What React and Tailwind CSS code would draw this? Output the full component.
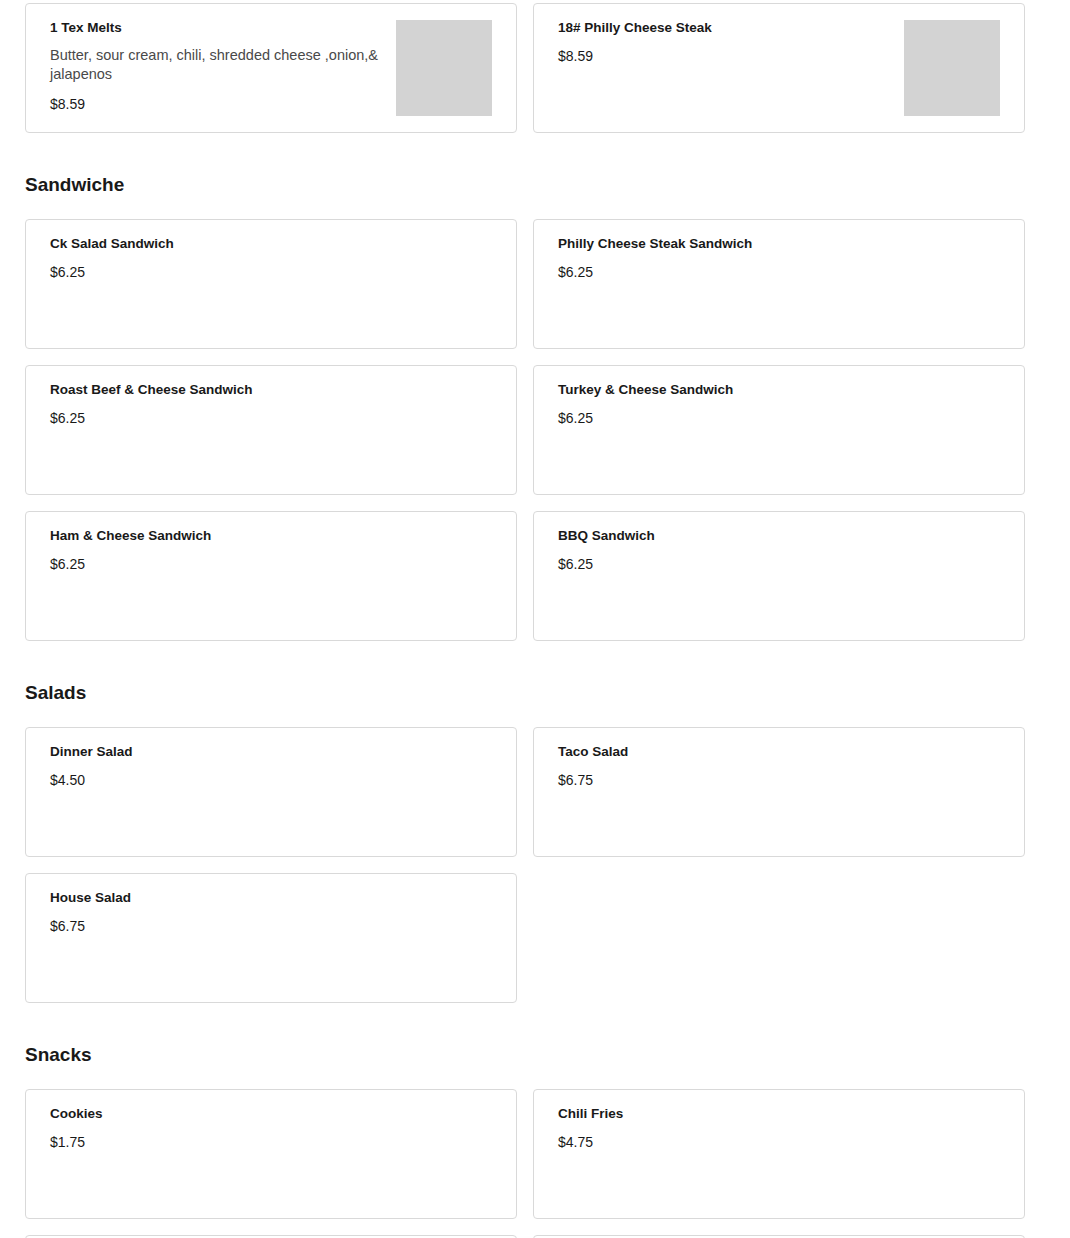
const sections = [
  {
    title: null,
    items: [
      {
        name: "1 Tex Melts",
        desc: "Butter, sour cream, chili, shredded cheese ,onion,& jalapenos",
        price: "$8.59",
        image: true,
      },
      { name: "18# Philly Cheese Steak", price: "$8.59", image: true },
    ],
  },
  {
    title: "Sandwiche",
    items: [
      { name: "Ck Salad Sandwich", price: "$6.25" },
      { name: "Philly Cheese Steak Sandwich", price: "$6.25" },
      { name: "Roast Beef & Cheese Sandwich", price: "$6.25" },
      { name: "Turkey & Cheese Sandwich", price: "$6.25" },
      { name: "Ham & Cheese Sandwich", price: "$6.25" },
      { name: "BBQ Sandwich", price: "$6.25" },
    ],
  },
  {
    title: "Salads",
    items: [
      { name: "Dinner Salad", price: "$4.50" },
      { name: "Taco Salad", price: "$6.75" },
      { name: "House Salad", price: "$6.75" },
    ],
  },
  {
    title: "Snacks",
    items: [
      { name: "Cookies", price: "$1.75" },
      { name: "Chili Fries", price: "$4.75" },
      { name: "Nachos", price: "$4.75" },
      { name: "Onion Rings", price: "$3.50" },
    ],
  },
];

function ItemCard({ item }) {
  return (
    <div className="flex h-[130px] gap-4 rounded border border-[#d9d9d9] bg-white px-6 py-4">
      <div className="flex min-w-0 flex-1 flex-col">
        <h3 className="text-[13.5px] leading-4 font-bold text-[#191919]">{item.name}</h3>
        {item.desc && (
          <p className="mt-[10px] text-[14.5px] leading-[19px] text-[#494949]">{item.desc}</p>
        )}
        <p className="mt-[10px] text-[14px] leading-5 text-[#191919]">{item.price}</p>
      </div>
      {item.image && <div className="h-24 w-24 shrink-0 bg-[#d3d3d3]" />}
    </div>
  );
}

export default function App() {
  return (
    <div className="min-h-screen bg-white pt-[3px] pl-[25px] font-['Liberation_Sans',Arial,sans-serif]">
      <div className="w-[1000px]">
        {sections.map((section, i) => (
          <section key={i} className={section.title ? "mt-10" : ""}>
            {section.title && (
              <h2 className="mb-[22px] text-[19px] leading-6 font-bold text-[#191919]">
                {section.title}
              </h2>
            )}
            <div className="grid grid-cols-2 gap-4">
              {section.items.map((item) => (
                <ItemCard key={item.name} item={item} />
              ))}
            </div>
          </section>
        ))}
      </div>
    </div>
  );
}
